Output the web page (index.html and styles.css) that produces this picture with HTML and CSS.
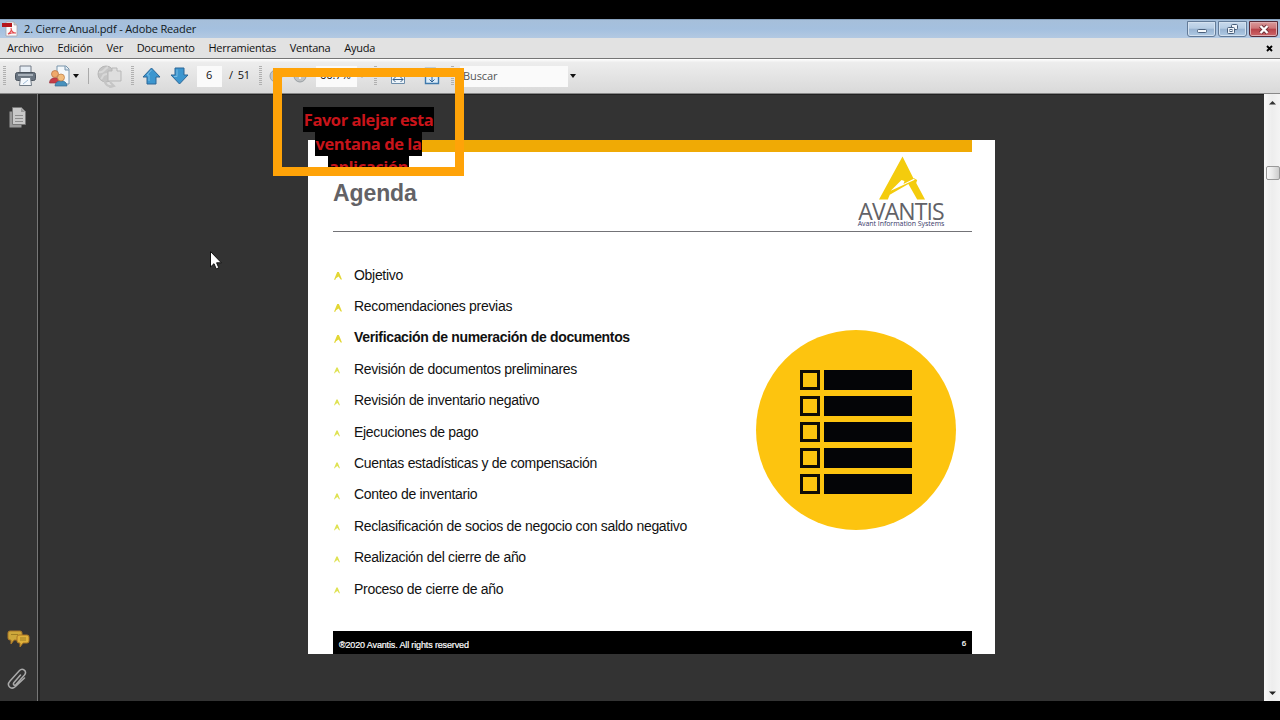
FILE: index.html
```html
<!DOCTYPE html>
<html lang="es">
<head>
    <meta charset="UTF-8">
    <meta name="viewport" content="width=device-width, initial-scale=1.0">
    <title>2. Cierre Anual.pdf - Adobe Reader</title>
    <link rel="stylesheet" href="styles.css">
</head>
<body>
    <svg class="defs" width="0" height="0">
        <symbol id="mark" viewBox="0 0 48 44">
            <path fill-rule="evenodd" d="M24 0 L35 22 L39 24 L38 27 L47 44 H39 L30 28 L11 39 L9 44 H0 Z M12 35 L23 24 L26 25 L25 28 L37 22 L36 24 Z"/>
        </symbol>
        <symbol id="bullet" viewBox="0 0 8 8">
            <path d="M3.2 0 H4.9 L8 7.6 H6.7 L4.6 4.6 L2 6.2 L1.3 7.8 H0 Z"/>
        </symbol>
    </svg>

    <div class="window">
        <header class="titlebar">
            <svg class="pdf-icon" width="16" height="16" viewBox="0 0 16 16">
                <path d="M4 1h8l3 3v11H4z" fill="#fafafa" stroke="#a9a3a8" stroke-width=".8"/>
                <path d="M12 1v3h3" fill="#ccc" stroke="#999" stroke-width=".6"/>
                <path d="M0 2h10v4H0z" fill="#b5151b"/>
                <path d="M6 13c3-2 4-4 3-6 0 3 2 5 5 5-3-1-5 0-8 1z" fill="none" stroke="#e2474b" stroke-width="1.1"/>
            </svg>
            <h1>2. Cierre Anual.pdf - Adobe Reader</h1>
            <div class="win-buttons">
                <span class="win-btn">
                    <svg width="28" height="15" viewBox="0 0 28 15"><rect x="9.500" y="7.500" width="9" height="3" rx="1" fill="#f5f8fb" stroke="#4a607c"/></svg>
                </span>
                <span class="win-btn">
                    <svg width="28" height="15" viewBox="0 0 28 15" fill="#f0f4f9" stroke="#4a607c"><rect x="12.500" y="2.500" width="6" height="5" rx="1"/><rect x="8.500" y="5.500" width="7" height="6" rx="1"/><rect x="11" y="7.500" width="2" height="2"/></svg>
                </span>
                <span class="win-btn close">
                    <svg width="28" height="15" viewBox="0 0 28 15"><path d="M10.500 4l7 7M17.500 4l-7 7" stroke="#6b3038" stroke-width="4"/><path d="M10.500 4l7 7M17.500 4l-7 7" stroke="#fff" stroke-width="2.400"/></svg>
                </span>
            </div>
        </header>

        <nav class="menubar">
            <span>Archivo</span>
            <span>Edición</span>
            <span>Ver</span>
            <span>Documento</span>
            <span>Herramientas</span>
            <span>Ventana</span>
            <span>Ayuda</span>
            <svg class="doc-close" width="7" height="7" viewBox="0 0 7 7"><path d="M1 1l5 5M6 1L1 6" stroke="#000" stroke-width="1.900"/></svg>
        </nav>

        <div class="toolbar">
            <i class="grip"></i>
            <svg class="tool print" width="21" height="22" viewBox="0 0 21 22">
                <path d="M5 1h11v7H5z" fill="#e6edf4" stroke="#727b86"/>
                <rect x=".5" y="7.500" width="20" height="8" rx="2" fill="#697480" stroke="#4a535d"/>
                <path d="M3 10h15" stroke="#a6afb8" stroke-width="2"/>
                <path d="M5.500 12.500h10l1 8h-12z" fill="#f4f8fc" stroke="#707a84"/>
                <path d="M8 19l5-4" stroke="#a2bdd7"/>
            </svg>
            <svg class="tool share" width="22" height="22" viewBox="0 0 22 22">
                <path d="M8 1h9l3 3v15H8z" fill="#f4f8fb" stroke="#7895ac"/>
                <path d="M16 1v4h4" fill="#d6e3ee" stroke="#7895ac"/>
                <path d="M.5 18c0-7 11-7 11 0z" fill="#c63d48" stroke="#9a3540" stroke-width=".7"/>
                <circle cx="6" cy="9" r="3.500" fill="#efa96b" stroke="#b56d3d" stroke-width=".7"/>
                <path d="M6 21c0-7 12-7 12 0z" fill="#4891bd" stroke="#376c91" stroke-width=".7"/>
                <circle cx="12" cy="12.500" r="3.500" fill="#f3bd7d" stroke="#b87842" stroke-width=".7"/>
            </svg>
            <i class="caret share-caret"></i>
            <i class="separator"></i>
            <svg class="tool globe" width="25" height="23" viewBox="0 0 25 23" stroke="#b7b7b7">
                <circle cx="9" cy="9" r="8" fill="#c5c5c5"/>
                <path d="M2 7c4 2 5-3 9-5M4 14c3-3 1-5 6-5" fill="none" stroke="#d8d8d8" stroke-width="2"/>
                <path d="M11 6h4V3h5v3h4v10H11z" fill="#dedede"/>
                <path d="M7 14c1 6 4 8 9 7M13 17l4 4-5 1.500" fill="none" stroke="#c5c5c5" stroke-width="2"/>
            </svg>
            <i class="grip grip-nav"></i>
            <svg class="tool up" width="19" height="18" viewBox="0 0 19 18"><path d="M9.500 1L18 10h-4v7H5v-7H1z" fill="#3c96cf" stroke="#2d6797" stroke-linejoin="round"/><path d="M9.500 3L5 8h2v6" fill="none" stroke="#7bbde4"/></svg>
            <svg class="tool down" width="19" height="18" viewBox="0 0 19 18"><path d="M9.500 17L18 8h-4V1H5v7H1z" fill="#3c96cf" stroke="#2d6797" stroke-linejoin="round"/><path d="M7 2.500v7H4" fill="none" stroke="#7bbde4"/></svg>
            <span class="field page-field">6</span>
            <span class="page-total">/&nbsp; 51</span>
            <i class="grip grip-zoom"></i>
            <svg class="tool zoom-out" width="14" height="14" viewBox="0 0 14 14"><circle cx="7" cy="7" r="6" fill="#bfc2c4" stroke="#999fa3"/><path d="M4 7h6" stroke="#eee" stroke-width="2"/></svg>
            <svg class="tool zoom-in" width="14" height="14" viewBox="0 0 14 14"><circle cx="7" cy="7" r="6" fill="#bfc2c4" stroke="#999fa3"/><path d="M4 7h6M7 4v6" stroke="#eee" stroke-width="2"/></svg>
            <span class="field zoom-field">66.7%</span>
            <i class="caret zoom-caret"></i>
            <i class="grip grip-fit"></i>
            <svg class="tool fit-width" width="16" height="18" viewBox="0 0 16 18"><path d="M1.500 1.500h10l3 3v12h-13z" fill="#edf4fa" stroke="#6c8ca9"/><path d="M3 12.500h10M5.500 10L3 12.500 5.500 15M10.500 10l2.500 2.500-2.500 2.500" fill="none" stroke="#3a6188"/></svg>
            <svg class="tool fit-page" width="16" height="18" viewBox="0 0 16 18"><path d="M1.500 1.500h10l3 3v12h-13z" fill="#dcecf9" stroke="#3f79ac" stroke-width="1.400"/><path d="M8 3v12M5.500 12.500L8 15l2.500-2.500M3 9.500h3M10 9.500h3" fill="none" stroke="#2f6192"/></svg>
            <i class="grip grip-find"></i>
            <span class="field find-field">Buscar</span>
            <i class="caret find-caret"></i>
        </div>

        <div class="workspace">
            <aside class="sidebar">
                <svg class="pages" width="17" height="21" viewBox="0 0 17 21">
                    <path d="M.5 4.500h12v16H.5z" fill="#9a9a9a"/>
                    <path d="M3.500.5h9l4 4v13h-13z" fill="#c9c9c9" stroke="#777"/>
                    <path d="M12 1v4h4" fill="#999"/>
                    <path d="M6 8.500h8M6 11.500h8M6 14.500h8" stroke="#8d8d8d"/>
                </svg>
                <svg class="comments" width="23" height="18" viewBox="0 0 23 18">
                    <path d="M3 1h10q2 0 2 2v5q0 2-2 2H7l-3 4V10H3Q1 10 1 8V3q0-2 2-2z" fill="#cda73a" stroke="#aa7627"/>
                    <path d="M12 5h8q2 0 2 2v4q0 2-2 2h-4l-3 4v-4h-1q-2 0-2-2V7q0-2 2-2z" fill="#dfb13b" stroke="#a97524"/>
                    <path d="M4 4.500h7M13 8h6M13 10h6" stroke="#9e7e24"/>
                </svg>
                <svg class="clip" width="20" height="22" viewBox="0 0 20 22"><path d="M13.500 7L7 14.500c-1.500 2 .5 3.500 2 2L17.500 7c3-4-2-7.500-5-4.500L3 13c-4 4.500 1 9.500 5.500 5.500L17.500 10" fill="none" stroke="#aaa" stroke-width="1.500" stroke-linecap="round"/></svg>
            </aside>

            <main class="canvas">
                <article class="slide">
                    <div class="stripe"></div>
                    <div class="slide-head">
                        <h2>Agenda</h2>
                        <div class="logo">
                            <svg width="47" height="44"><use href="#mark"/></svg>
                            <strong>AVANTIS</strong>
                            <small>Avant Information Systems</small>
                        </div>
                    </div>
                    <div class="slide-body">
                        <ul class="agenda">
                            <li class="done"><svg><use href="#bullet"/></svg>Objetivo</li>
                            <li class="done"><svg><use href="#bullet"/></svg>Recomendaciones previas</li>
                            <li class="done current"><svg><use href="#bullet"/></svg>Verificación de numeración de documentos</li>
                            <li><svg><use href="#bullet"/></svg>Revisión de documentos preliminares</li>
                            <li><svg><use href="#bullet"/></svg>Revisión de inventario negativo</li>
                            <li><svg><use href="#bullet"/></svg>Ejecuciones de pago</li>
                            <li><svg><use href="#bullet"/></svg>Cuentas estadísticas y de compensación</li>
                            <li><svg><use href="#bullet"/></svg>Conteo de inventario</li>
                            <li><svg><use href="#bullet"/></svg>Reclasificación de socios de negocio con saldo negativo</li>
                            <li><svg><use href="#bullet"/></svg>Realización del cierre de año</li>
                            <li><svg><use href="#bullet"/></svg>Proceso de cierre de año</li>
                        </ul>
                        <div class="checklist">
                            <div><i></i><b></b></div>
                            <div><i></i><b></b></div>
                            <div><i></i><b></b></div>
                            <div><i></i><b></b></div>
                            <div><i></i><b></b></div>
                        </div>
                    </div>
                    <footer class="slide-foot">
                        <span>®2020 Avantis. All rights reserved</span>
                        <span class="number">6</span>
                    </footer>
                </article>
            </main>

            <div class="scrollbar">
                <svg width="7" height="5" viewBox="0 0 7 5"><path d="M0 4.500L3.500 1 7 4.500z" fill="#333"/></svg>
                <div class="thumb"></div>
                <svg class="arrow-down" width="7" height="5" viewBox="0 0 7 5"><path d="M0 .5L3.500 4 7 .5z" fill="#222"/></svg>
            </div>
        </div>
    </div>

    <div class="notice">
        <p><span>Favor alejar esta<br>ventana de la<br>aplicación</span></p>
    </div>

    <svg class="cursor" width="12" height="19" viewBox="0 0 12 19"><path d="M.5.500v15.500l3.500-3.300 2.200 5.200 2.600-1.100-2.200-5h4.800z" fill="#fff" stroke="#111"/></svg>
</body>
</html>
```
FILE: styles.css
```css
* {
    margin: 0;
    padding: 0;
    box-sizing: border-box;
}

body {
    width: 1280px;
    height: 720px;
    padding: 19px 0;
    background: #000;
    overflow: hidden;
    font-family: "Open Sans", "Noto Sans", sans-serif;
    font-size: 11px;
    color: #111;
}

.defs {
    position: absolute;
}

svg {
    display: block;
    flex-shrink: 0;
}

.window {
    height: 682px;
    display: flex;
    flex-direction: column;
}

/* Title bar */
.titlebar {
    height: 19px;
    display: flex;
    align-items: center;
    padding-left: 2px;
    background: linear-gradient(#a6bfda, #a4c0df 50%, #b3c9e2);
    border-top: 1px solid #89a3bf;
}

.titlebar h1 {
    margin-left: 6px;
    margin-top: -2px;
    font-size: 11px;
    font-weight: normal;
    letter-spacing: -0.15px;
    color: #101820;
}

.win-buttons {
    display: flex;
    gap: 2px;
    margin-left: auto;
    margin-right: 2px;
    margin-top: -1px;
}

.win-btn {
    width: 29px;
    height: 16px;
    border: 1px solid #637b98;
    border-radius: 0 0 3px 3px;
    background: linear-gradient(#c7d9ec, #b6cce3 45%, #98b3d1 50%, #b0cae4);
    box-shadow: inset 0 0 0 1px #d4e1ef;
    overflow: hidden;
}

.win-btn.close {
    border-color: #562b38;
    background: linear-gradient(#d99b9c, #cd7477 45%, #b64248 50%, #cf666a);
    box-shadow: inset 0 0 0 1px #dfadb0;
}

/* Menu */
.menubar {
    height: 20px;
    display: flex;
    align-items: center;
    gap: 13.7px;
    padding: 0 7px 1px;
    background: #e2e2e2;
    letter-spacing: -0.24px;
}

.doc-close {
    margin-left: auto;
    margin-top: 2px;
}

/* Toolbar */
.toolbar {
    height: 36px;
    display: flex;
    align-items: center;
    padding-left: 3px;
    border-top: 1px solid #757575;
    border-bottom: 1px solid #888;
    background: linear-gradient(#fff, #ededed 10%, #d9d9d9);
    box-shadow: inset 0 1px #fff;
}

.grip {
    width: 3px;
    height: 20px;
    flex-shrink: 0;
    background: repeating-linear-gradient(#b0b0b0 0 1px, transparent 1px 2px);
}

.caret {
    width: 6px;
    height: 4px;
    flex-shrink: 0;
    background: #111;
    clip-path: polygon(0 0, 100% 0, 50% 100%);
}

.separator {
    width: 1px;
    height: 16px;
    margin-left: 9px;
    background: #aaa;
}

.field {
    height: 21px;
    flex-shrink: 0;
    background: #fafafa;
    line-height: 18px;
}

.print { margin-left: 9px; }
.share { margin-left: 13px; }
.share-caret { margin-left: 2px; }
.globe { margin-left: 8px; }
.grip-nav { margin-left: 9px; }
.up { margin-left: 8px; }
.down { margin-left: 9px; }
.page-field {
    width: 25px;
    margin-left: 8px;
    padding-left: 9px;
}
.page-total {
    width: 26px;
    margin-left: 7px;
    margin-top: -3px;
    white-space: nowrap;
    letter-spacing: -0.3px;
}
.grip-zoom { margin-left: 4px; }
.zoom-out { margin-left: 7px; }
.zoom-in { margin-left: 10px; }
.zoom-field {
    width: 41px;
    margin-left: 9px;
    padding-left: 4px;
}
.zoom-caret {
    margin-left: 2px;
    background: #999;
}
.grip-fit { margin-left: 9px; }
.fit-width { margin-left: 13px; }
.fit-page { margin-left: 18px; }
.grip-find { margin-left: 11px; }
.find-field {
    width: 108px;
    margin-left: 6px;
    padding-left: 3px;
    line-height: 20px;
    letter-spacing: -0.1px;
    color: #555;
}
.find-caret { margin-left: 2px; }

/* Workspace */
.workspace {
    flex: 1;
    min-height: 0;
    display: flex;
    background: #333;
}

.sidebar {
    width: 40px;
    display: flex;
    flex-direction: column;
    padding: 13px 0 11px 9px;
    background: linear-gradient(90deg, #333 37px, #777 37px 38px, #222 38px 40px);
}

.comments {
    margin-top: auto;
    margin-left: -2px;
}

.clip {
    margin-top: 20px;
    margin-left: -2px;
}

.canvas {
    flex: 1;
    padding: 45px 0 0 268px;
    border-top: 1px solid #222;
}

.scrollbar {
    width: 16px;
    display: flex;
    flex-direction: column;
    align-items: center;
    padding: 6px 0 5px 1px;
    background: linear-gradient(90deg, #fafafa, #ededed 50%, #f4f4f4);
}

.thumb {
    width: 14px;
    height: 14px;
    margin-top: 61px;
    border: 1px solid #999;
    border-radius: 2px;
    background: linear-gradient(90deg, #fafafa, #e9e9e9 45%, #ccc);
}

.arrow-down {
    margin-top: auto;
}

/* Slide */
.slide {
    width: 687px;
    height: 514px;
    display: flex;
    flex-direction: column;
    padding: 0 23px 0 25px;
    background: #fff;
    font-family: "Liberation Sans", Arial, sans-serif;
    color: #111;
}

.stripe {
    height: 12px;
    background: #f0aa05;
}

.slide-head {
    height: 80px;
    display: flex;
    justify-content: space-between;
    border-bottom: 1px solid #737377;
}

.slide-head h2 {
    margin-top: 28px;
    font-size: 23px;
    line-height: 26px;
    letter-spacing: -0.1px;
    color: #636266;
}

.logo {
    width: 88px;
    margin-right: 27px;
    padding-top: 4px;
    display: flex;
    flex-direction: column;
    align-items: center;
    white-space: nowrap;
    font-family: "Open Sans", sans-serif;
}

.logo svg {
    margin-left: 2px;
    fill: #f4cc0d;
}

.logo strong {
    margin-top: 2px;
    font-size: 23px;
    font-weight: normal;
    line-height: 18px;
    letter-spacing: -0.9px;
    color: #626267;
}

.logo small {
    font-size: 7px;
    line-height: 8px;
    letter-spacing: -0.05px;
    color: #39396a;
}

.slide-body {
    flex: 1;
    display: flex;
}

.agenda {
    width: 423px;
    padding-top: 27px;
    list-style: none;
    font-size: 14px;
    letter-spacing: -0.3px;
}

.agenda li {
    height: 31.4px;
    display: flex;
    align-items: center;
    white-space: nowrap;
}

.agenda svg {
    width: 6px;
    height: 7px;
    margin: 4px 14px 0 1px;
    fill: #dfe253;
}

.agenda .done svg {
    width: 8px;
    height: 8px;
    margin: 3px 12px 0 1px;
    fill: #e3d735;
}

.agenda .current {
    font-weight: bold;
    letter-spacing: -0.34px;
}

.checklist {
    width: 200px;
    height: 200px;
    margin-top: 98px;
    padding: 40px 0 0 44px;
    border-radius: 50%;
    background: #fdc40f;
}

.checklist div {
    display: flex;
    gap: 4px;
    margin-bottom: 6px;
}

.checklist i {
    width: 20px;
    height: 20px;
    border: 3px solid #100c06;
}

.checklist b {
    width: 88px;
    height: 20px;
    background: #040507;
}

.slide-foot {
    height: 23px;
    display: flex;
    justify-content: space-between;
    align-items: center;
    padding: 4px 6px 0;
    background: #000;
    color: #fff;
    font-size: 9px;
    letter-spacing: -0.14px;
    -webkit-text-stroke: 0.2px #fff;
}

.slide-foot .number {
    font-size: 8px;
    margin-top: -3px;
}

/* Floating notice over the document */
.notice {
    position: absolute;
    left: 273px;
    top: 68px;
    width: 191px;
    height: 108px;
    padding: 31px 0 0;
    border: 9px solid #ffa308;
    overflow: hidden;
    text-align: center;
    font-size: 16.5px;
    font-weight: bold;
    line-height: 23.5px;
    letter-spacing: -0.45px;
    color: #c8141a;
}

.notice span {
    padding: 1px;
    background: #000;
    -webkit-box-decoration-break: clone;
    box-decoration-break: clone;
}

.cursor {
    position: absolute;
    left: 210px;
    top: 251px;
}
```
